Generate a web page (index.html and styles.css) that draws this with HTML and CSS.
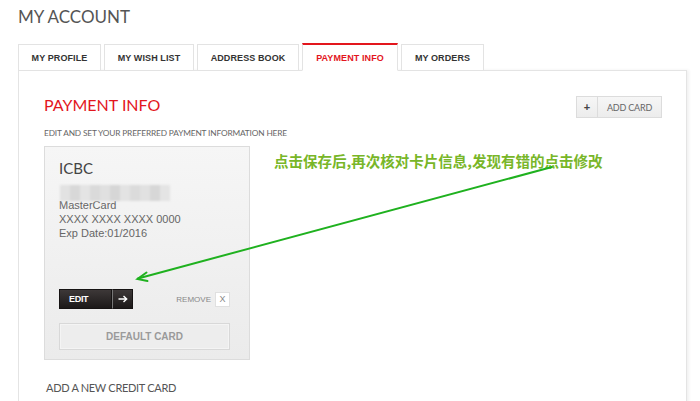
FILE: index.html
```html
<!DOCTYPE html>
<html lang="en">
<head>
<meta charset="utf-8">
<title>My Account</title>
<link rel="stylesheet" href="styles.css">
</head>
<body>
<div class="page">
  <h1 class="title">MY ACCOUNT</h1>
  <nav class="tabs">
    <a class="tab tab-profile">MY PROFILE</a>
    <a class="tab tab-wish">MY WISH LIST</a>
    <a class="tab tab-address">ADDRESS BOOK</a>
    <a class="tab tab-payment active">PAYMENT INFO</a>
    <a class="tab tab-orders">MY ORDERS</a>
  </nav>
  <section class="panel">
    <div class="panel-head">
      <h2 class="heading">PAYMENT INFO</h2>
      <button class="add-card"><span class="add-plus">+</span><span class="add-label">ADD CARD</span></button>
    </div>
    <p class="subtitle">EDIT AND SET YOUR PREFERRED PAYMENT INFORMATION HERE</p>
    <div class="card">
      <div class="bank">ICBC</div>
      <div class="blurred"><i class="b1"></i><i class="b2"></i><i class="b3"></i><i class="b4"></i><i class="b5"></i><i class="b6"></i><i class="b7"></i><i class="b8"></i><i class="b9"></i><i class="b10"></i><i class="b11"></i></div>
      <div class="info">
        <div>MasterCard</div>
        <div>XXXX XXXX XXXX 0000</div>
        <div>Exp Date:01/2016</div>
      </div>
      <div class="actions">
        <div class="edit-group">
          <button class="edit">EDIT</button>
          <button class="go">
            <svg width="10" height="8" viewBox="0 0 10 8"><path d="M0.5 4H8.5M5.5 1L8.7 4L5.5 7" fill="none" stroke="#fff" stroke-width="1.4"/></svg>
          </button>
        </div>
        <div class="remove-group">
          <span class="remove">REMOVE</span>
          <span class="remove-x">X</span>
        </div>
      </div>
      <button class="default-card">DEFAULT CARD</button>
    </div>
    <div class="add-new">ADD A NEW CREDIT CARD</div>
  </section>
  <div class="note">点击保存后,再次核对卡片信息,发现有错的点击修改</div>
  <svg class="arrow" width="700" height="401" viewBox="0 0 700 401">
    <g stroke="#1fb11f" stroke-width="2" fill="none" stroke-linecap="round">
      <path d="M552 167L138 278.5"/>
      <path d="M146.5 272.5L137.5 279L147.5 281"/>
    </g>
  </svg>
</div>
</body>
</html>
```
FILE: styles.css
```css
* { box-sizing: border-box; }
html, body { margin: 0; padding: 0; background: #fff; }
body { font-family: Lato, "Open Sans", Arial, sans-serif; }
.page { position: relative; width: 700px; height: 401px; overflow: hidden; }

.title {
  margin: 0;
  padding: 6px 0 0 18px;
  font-size: 17px;
  line-height: 22px;
  font-weight: 400;
  color: #555;
}

.tabs {
  display: flex;
  align-items: flex-end;
  gap: 3px;
  margin: 15px 0 -1px 18px;
  position: relative;
  z-index: 2;
  height: 28px;
}
.tab {
  display: flex;
  align-items: center;
  justify-content: center;
  height: 27px;
  border: 1px solid #e3e3e3;
  background: #fff;
  font-family: "Liberation Sans", Arial, sans-serif;
  font-weight: 700;
  font-size: 9px;
  color: #333;
  letter-spacing: 0.1px;
}
.tab-profile { width: 83px; }
.tab-wish { width: 90px; }
.tab-address { width: 102px; }
.tab-payment { width: 96px; }
.tab-orders { width: 83px; }
.tab.active {
  height: 28px;
  border-top: 2px solid #e3161d;
  border-bottom-color: #fff;
  color: #e3161d;
}

.panel {
  margin-left: 18px;
  width: 669px;
  height: 340px;
  border: 1px solid #e4e4e4;
  box-shadow: 2px 0 3px rgba(0,0,0,0.06);
  padding: 24px 24px 0 25px;
}
.panel-head {
  display: flex;
  justify-content: space-between;
  align-items: flex-start;
}
.heading {
  margin: 0;
  font-size: 16px;
  line-height: 20px;
  font-weight: 400;
  color: #e3161d;
}
.add-card {
  margin-top: 1px;
  display: flex;
  height: 22px;
  padding: 0;
  border: 1px solid #dcdcdc;
  background: linear-gradient(#f6f6f6, #ececec);
  font-family: Lato, Arial, sans-serif;
  cursor: pointer;
}
.add-plus {
  width: 21px;
  height: 100%;
  display: flex;
  align-items: center;
  justify-content: center;
  border-right: 1px solid #dcdcdc;
  font-family: "Liberation Sans", Arial, sans-serif;
  font-weight: 700;
  font-size: 11px;
  color: #444;
}
.add-label {
  width: 63px;
  height: 100%;
  display: flex;
  align-items: center;
  justify-content: center;
  font-size: 9px;
  color: #666;
  letter-spacing: -0.2px;
}

.subtitle {
  margin: 9px 0 0 0;
  font-size: 8.3px;
  line-height: 12px;
  color: #666;
  letter-spacing: -0.15px;
}

.card {
  margin-top: 7px;
  width: 206px;
  height: 214px;
  border: 1px solid #dcdcdc;
  background: linear-gradient(#f6f6f6, #ebebeb);
  padding: 12px 19px 9px 14px;
}
.bank {
  font-size: 15px;
  line-height: 18px;
  color: #444;
}
.blurred {
  margin: 8px 0 0 1px;
  width: 110px;
  height: 16px;
  display: flex;
  filter: blur(1.2px);
}
.blurred i { flex: 1; height: 100%; display: block; }
.b1 { background: #e2e2e2; } .b2 { background: #d8d8d8; } .b3 { background: #e4e4e4; }
.b4 { background: #dadada; } .b5 { background: #e0e0e0; } .b6 { background: #d6d6d6; }
.b7 { background: #e3e3e3; } .b8 { background: #dbdbdb; } .b9 { background: #e1e1e1; }
.b10 { background: #d7d7d7; } .b11 { background: #e4e4e4; }

.info {
  margin-top: -3px;
  font-family: "Liberation Sans", Arial, sans-serif;
  font-size: 11px;
  line-height: 14px;
  color: #666;
}

.actions {
  margin-top: 49px;
  height: 20px;
  display: flex;
  justify-content: space-between;
  align-items: center;
}
.edit-group { display: flex; height: 20px; }
.edit, .go {
  height: 20px;
  padding: 0;
  border: 1px solid #161313;
  background: linear-gradient(#3d3838, #1c1919);
  color: #fff;
  font-family: "Liberation Sans", Arial, sans-serif;
  font-weight: 700;
  font-size: 9px;
}
.edit {
  width: 53px;
  text-align: left;
  padding-left: 9px;
  letter-spacing: -0.3px;
}
.go {
  width: 21px;
  border-left: 1px solid #777;
  display: flex;
  align-items: center;
  justify-content: center;
}
.remove-group { display: flex; align-items: center; gap: 4px; }
.remove {
  font-family: "Liberation Sans", Arial, sans-serif;
  font-size: 8px;
  color: #888;
}
.remove-x {
  width: 15px;
  height: 15px;
  background: #fff;
  border: 1px solid #e0e0e0;
  display: flex;
  align-items: center;
  justify-content: center;
  font-family: "Liberation Sans", Arial, sans-serif;
  font-size: 9px;
  color: #888;
}

.default-card {
  margin-top: 14px;
  width: 171px;
  height: 27px;
  border: 1px solid #d8d8d8;
  box-shadow: inset 0 0 0 1px #f4f4f4;
  background: #ededed;
  font-family: "Liberation Sans", Arial, sans-serif;
  font-weight: 700;
  font-size: 10px;
  color: #9a9a9a;
  padding: 0;
}

.add-new {
  margin: 21px 0 0 2px;
  font-size: 11px;
  line-height: 14px;
  color: #555;
  letter-spacing: -0.3px;
}

.note {
  position: absolute;
  left: 274px;
  top: 153px;
  font-family: "Noto Sans CJK SC", "Liberation Sans", sans-serif;
  font-weight: 700;
  font-size: 14.5px;
  line-height: 16px;
  color: #78b628;
  white-space: nowrap;
}
.arrow {
  position: absolute;
  left: 0;
  top: 0;
  pointer-events: none;
}
```
